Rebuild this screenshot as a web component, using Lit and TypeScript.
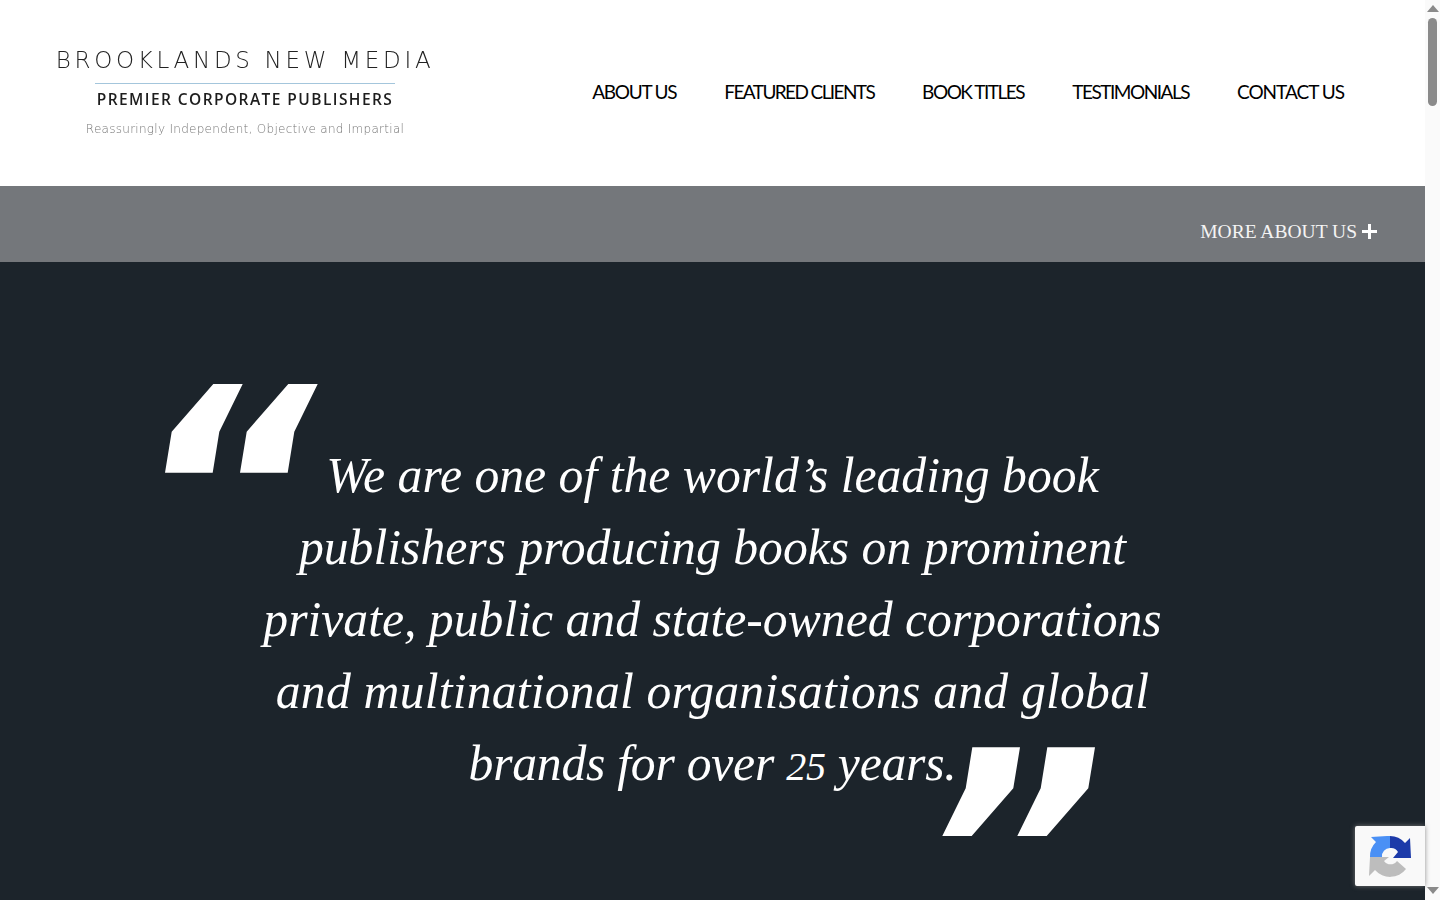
import { LitElement, html, css, svg } from "lit";
import { customElement } from "lit/decorators.js";
import { styleMap } from "lit/directives/style-map.js";

const markGlyph = svg`<polygon points="48.3,0 77.7,0 54.3,47.7 47.7,88.7 0,88.7 6.7,47.7" /><polygon points="123.3,0 152.7,0 129.3,47.7 122.7,88.7 75,88.7 81.7,47.7" />`;

const links: [string, number][] = [
  ["ABOUT US", -1.25],
  ["FEATURED CLIENTS", -1.6],
  ["BOOK TITLES", -1.48],
  ["TESTIMONIALS", -1.49],
  ["CONTACT US", -1.0],
];

@customElement("app-root")
export class AppRoot extends LitElement {
  static styles = css`
    :host { display: grid; grid-template-columns: 1fr 15px; height: 100vh; overflow: hidden; position: relative; background: #fff; }
    .main { display: flex; flex-direction: column; min-width: 0; }
    header { height: 186px; display: flex; align-items: center; justify-content: space-between; padding: 0 81px 0 58px; box-sizing: border-box; background: #fff; }
    .logo { width: 374px; flex: none; display: flex; flex-direction: column; align-items: center; padding-bottom: 3px; filter: blur(0.3px); }
    .l1 { font: 200 23px/28px "DejaVu Sans", sans-serif; letter-spacing: 3.7px; word-spacing: 0; color: #222; white-space: nowrap; }
    .rule { width: 300px; height: 1px; background: #a4c6dc; margin: 9px 0 6px; }
    .l2 { font: 600 15.5px/18px "Open Sans", sans-serif; letter-spacing: 1.43px; color: #1d1d1d; white-space: nowrap; }
    .l3 { font: 200 12px/18px "DejaVu Sans", sans-serif; letter-spacing: 0.28px; color: #777; margin-top: 12px; white-space: nowrap; }
    nav { display: flex; gap: 48px; padding-bottom: 2px; flex: none; }
    nav a { font: 400 19px/24px Lato, sans-serif; color: #000; text-decoration: none; white-space: nowrap; }
    .band { height: 76px; background: #74777b; display: flex; justify-content: flex-end; align-items: center; gap: 5px; padding: 15px 48px 0 0; box-sizing: border-box; color: #fff; }
    .band span { font: 400 19.5px/24px "Liberation Serif", serif; color: #f4f4f4; }
    .band svg { width: 15px; height: 15px; fill: #fff; display: block; }
    .hero { flex: 1; background: #1c242b; display: flex; justify-content: center; padding-top: 178px; box-sizing: border-box; }
    blockquote { margin: 0; position: relative; font: italic 400 49.7px/72px "Liberation Serif", serif; color: #fff; text-align: center; white-space: nowrap; }
    .line { display: block; }
    .wide { letter-spacing: 0.2px; }
    .tight { letter-spacing: -0.25px; }
    .num { font-size: 40px; }
    .mark { position: absolute; width: 153px; height: 89px; fill: #fff; display: block; }
    .open { left: -98px; top: -56px; }
    .close { right: 67px; bottom: 64px; transform: rotate(180deg); }
    .bar { background: #fafafa; position: relative; display: flex; flex-direction: column; align-items: center; justify-content: space-between; padding: 5px 0 6px; box-sizing: border-box; }
    .bar svg { width: 12px; height: 7px; fill: #8a8a8a; display: block; }
    .thumb { position: absolute; top: 18px; left: 3px; width: 9px; height: 88px; border-radius: 5px; background: #8a8a8a; }
    .badge { position: absolute; left: 1355px; top: 826px; width: 70px; height: 60px; background: #f9f9f9; border-radius: 2px 0 0 2px; box-shadow: 0 0 5px rgba(128,128,128,.9); display: flex; align-items: center; justify-content: center; padding-right: 1px; box-sizing: border-box; }
    .badge svg { width: 44px; height: 44px; display: block; }
  `;

  render() {
    return html`
      <div class="main">
        <header>
          <div class="logo">
            <div class="l1">BROOKLANDS NEW MEDIA</div>
            <div class="rule"></div>
            <div class="l2">PREMIER CORPORATE PUBLISHERS</div>
            <div class="l3">Reassuringly Independent, Objective and Impartial</div>
          </div>
          <nav>
            ${links.map(([label, ls]) => html`<a href="#" style=${styleMap({ letterSpacing: `${ls}px` })}>${label}</a>`)}
          </nav>
        </header>
        <div class="band">
          <span>MORE ABOUT US</span>
          <svg viewBox="0 0 15 15"><rect x="0" y="6" width="15" height="3"/><rect x="6" y="0" width="3" height="15"/></svg>
        </div>
        <div class="hero">
          <blockquote>
            <svg class="mark open" viewBox="0 0 153 89">${markGlyph}</svg>
            <span class="line">We are one of the world’s leading book</span>
            <span class="line">publishers producing books on prominent</span>
            <span class="line">private, public and state-owned corporations</span>
            <span class="line wide">and multinational organisations and global</span>
            <span class="line tight">brands for over <span class="num">25</span> years.</span>
            <svg class="mark close" viewBox="0 0 153 89">${markGlyph}</svg>
          </blockquote>
        </div>
      </div>
      <div class="bar">
        <svg viewBox="0 0 12 7"><polygon points="6,0 12,7 0,7"/></svg>
        <div class="thumb"></div>
        <svg viewBox="0 0 12 7"><polygon points="0,0 12,0 6,7"/></svg>
      </div>
      <div class="badge">
        <svg viewBox="-22 -22 44 44">
          <path fill="#4a90f5" d="M0,-20 L0,-8 A8,8 0 0 0 -8,1 L-20,1 A20,20 0 0 1 -14,-14 L-19,-19 L-3,-20 Z"/>
          <path fill="#1c3aa9" d="M0,-20 A20,20 0 0 1 15,-13 L20,-18 L21,2 L3,2 L8,-4 A8,8 0 0 0 0,-8 Z"/>
          <path fill="#bdbdbd" d="M-20,1 L-21,20 L-15,14 A20,20 0 0 0 16,13 L7,5 A8,8 0 0 1 -6,5 L-1,1 Z"/>
        </svg>
      </div>
    `;
  }
}
